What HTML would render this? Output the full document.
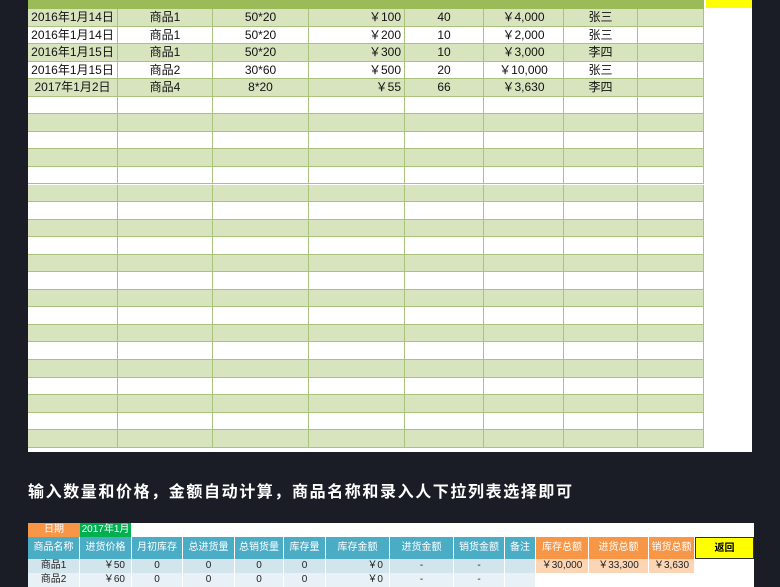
<!DOCTYPE html>
<html><head><meta charset="utf-8"><style>
*{margin:0;padding:0;box-sizing:border-box}
body{width:780px;height:585px;overflow:hidden;background:#1b1d26;position:relative;font-family:"Liberation Sans","Noto Sans CJK SC",sans-serif;}
.abs{position:absolute}
.c{position:absolute;font-size:12px;line-height:17px;color:#111;text-align:center;border-right:1px solid #a9c47a;}
.b{position:absolute;font-size:10px;text-align:center;border-right:1px solid #fff;}
</style></head><body>
<div class="abs" style="left:28px;top:0;width:724px;height:452px;background:#fff"></div>
<div class="abs" style="left:28px;top:0;width:676px;height:9px;background:#9bbb59"></div>
<div class="abs" style="left:706px;top:0;width:46px;height:8px;background:#ffff00"></div>
<div id="t"></div>
<div class="abs" style="left:28px;top:478px;color:#fff;font-size:16px;font-weight:bold;letter-spacing:1.6px;font-family:'Noto Sans CJK SC',sans-serif">输入数量和价格，金额自动计算，商品名称和录入人下拉列表选择即可</div>
<div class="abs" style="left:28px;top:523px;width:726px;height:62px;background:#fff"></div>
<div class="abs" style="left:28px;top:523px;width:52px;height:14px;background:#f79646;color:#fff;font-size:10px;text-align:center;line-height:14px">日期</div>
<div class="abs" style="left:80px;top:523px;width:51px;height:14px;background:#00b050;color:#fff;font-size:10px;text-align:center;line-height:14px">2017年1月</div>
<div id="b"></div>
<script>
var cols=[28,118,213,309,405,484,564,638,704];
var data=[["2016年1月14日","商品1","50*20","￥100","40","￥4,000","张三",""],
["2016年1月14日","商品1","50*20","￥200","10","￥2,000","张三",""],
["2016年1月15日","商品1","50*20","￥300","10","￥3,000","李四",""],
["2016年1月15日","商品2","30*60","￥500","20","￥10,000","张三",""],
["2017年1月2日","商品4","8*20","￥55","66","￥3,630","李四",""]];
var h="";
for(var r=0;r<25;r++){var y=9+r*17.55;
h+='<div class="abs" style="left:28px;top:'+y+'px;width:676px;height:17.55px;background:'+(r%2==0?'#d7e4bd':'#fff')+';border-bottom:1px solid #a9c47a"></div>';
for(var c=0;c<8;c++){var t=(data[r]||[])[c]||"";
h+='<div class="c" style="left:'+cols[c]+'px;top:'+y+'px;width:'+(cols[c+1]-cols[c])+'px;height:17.55px;'+(c==3?'text-align:right;padding-right:3px':'')+'">'+t+'</div>';}}
document.getElementById('t').innerHTML=h;
var bc=[28,80,132,183,235,284,326,390,454,505,536,589,649,695,754];
var hd=["商品名称","进货价格","月初库存","总进货量","总销货量","库存量","库存金额","进货金额","销货金额","备注","库存总额","进货总额","销货总额","返回"];
var r1=["商品1","￥50","0","0","0","0","￥0","-","-","","￥30,000","￥33,300","￥3,630",""];
var r2=["商品2","￥60","0","0","0","0","￥0","-","-","","","","",""];
h="";
for(var c=0;c<14;c++){var w=bc[c+1]-bc[c];
var bg=c<10?'#4bacc6':(c<13?'#f79646':'#ffff00');
h+='<div class="b" style="left:'+bc[c]+'px;top:537px;width:'+w+'px;height:22px;line-height:22px;background:'+bg+';color:'+(c==13?'#000':'#fff')+';'+(c==13?'border:1px solid #333;font-weight:bold':'')+'">'+hd[c]+'</div>';
var bg1=c<10?'#d2e4ec':(c<13?'#fcd5b4':'#fff');var bg2=c<10?'#e8f1f5':'#fff';
var al=(c==1||c==6)?'text-align:right;padding-right:6px;':'';
h+='<div class="b" style="left:'+bc[c]+'px;top:559px;width:'+w+'px;height:14px;line-height:14px;background:'+bg1+';color:#222;'+al+'">'+r1[c]+'</div>';
h+='<div class="b" style="left:'+bc[c]+'px;top:573px;width:'+w+'px;height:14px;line-height:14px;background:'+bg2+';color:#222;'+al+'">'+r2[c]+'</div>';}
document.getElementById('b').innerHTML=h;
</script>
</body></html>
